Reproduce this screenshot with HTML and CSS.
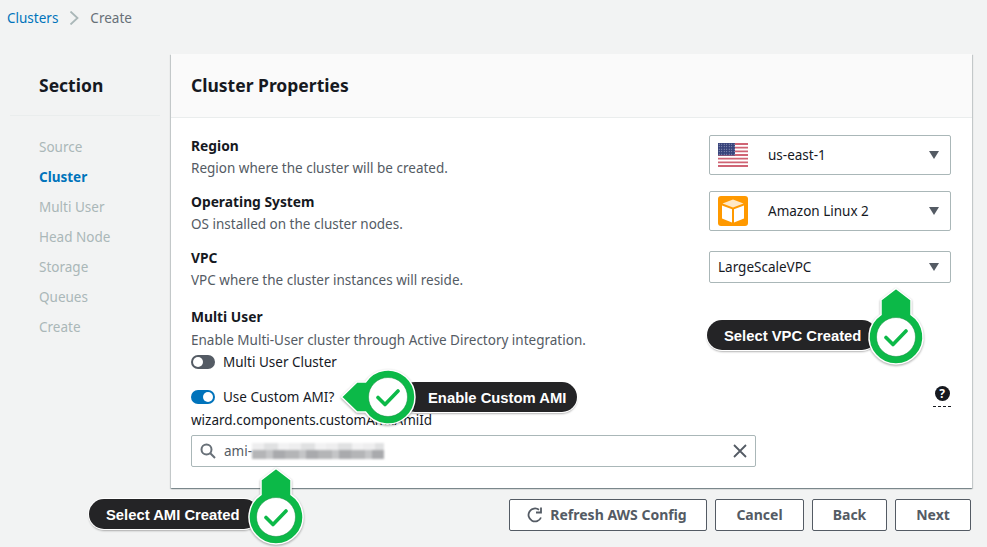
FILE: index.html
```html
<!DOCTYPE html>
<html lang="en">
<head>
    <meta charset="UTF-8">
    <title>Create Cluster</title>
    <link rel="stylesheet" href="styles.css">
</head>
<body>
    <svg class="defs" width="0" height="0">
        <defs>
            <pattern id="stars" width="2.500" height="2.500" patternUnits="userSpaceOnUse">
                <rect width="2.500" height="2.500" fill="#36427a"/>
                <circle cx="1.200" cy="1.200" r="0.500" fill="#b9bfd8"/>
            </pattern>
        </defs>
        <symbol id="check" viewBox="0 0 24 24">
            <path d="M2 12.500l7 7L22 6" fill="none" stroke="#0cb948" stroke-width="3.600" stroke-linecap="round" stroke-linejoin="round"/>
        </symbol>
    </svg>

    <nav class="crumbs">
        <a href="#">Clusters</a>
        <svg class="crumb-sep" width="10" height="14" viewBox="0 0 10 14"><path d="M1.500 .5l7 6.500-7 6.500" fill="none" stroke="#aab7b8" stroke-width="1.800"/></svg>
        <span>Create</span>
    </nav>

    <div class="layout">
        <aside class="sidebar">
            <h2>Section</h2>
            <ul class="steps">
                <li>Source</li>
                <li class="active">Cluster</li>
                <li>Multi User</li>
                <li>Head Node</li>
                <li>Storage</li>
                <li>Queues</li>
                <li>Create</li>
            </ul>
        </aside>

        <main class="main">
            <section class="panel">
                <h1 class="panel-head">Cluster Properties</h1>
                <div class="panel-body">
                    <div class="row">
                        <div>
                            <div class="field-title">Region</div>
                            <div class="field-desc">Region where the cluster will be created.</div>
                        </div>
                        <div class="select select-tall">
                            <svg class="select-icon" width="30" height="24" viewBox="0 0 30 24">
                                <rect width="30" height="24" fill="#fff"/>
                                <path d="M0 1h30M0 4.700h30M0 8.400h30M0 12h30M0 15.700h30M0 19.400h30M0 23h30" stroke="#cf6474" stroke-width="1.800"/>
                                <rect width="17" height="12.500" fill="url(#stars)"/>
                            </svg>
                            <span class="select-text">us-east-1</span>
                            <span class="caret"></span>
                        </div>
                    </div>

                    <div class="row">
                        <div>
                            <div class="field-title">Operating System</div>
                            <div class="field-desc">OS installed on the cluster nodes.</div>
                        </div>
                        <div class="select select-tall">
                            <svg class="select-icon" width="30" height="30" viewBox="0 0 30 30">
                                <rect width="30" height="30" rx="3" fill="#ff9900"/>
                                <path d="M15 3.500l10.500 4-10.500 4-10.500-4z" fill="#ffe9c7"/>
                                <path d="M4 9.500l10 3.800v13.200L4 22.500z" fill="#fff"/>
                                <path d="M26 9.500l-10 3.800v13.200l10-4z" fill="#fff"/>
                            </svg>
                            <span class="select-text">Amazon Linux 2</span>
                            <span class="caret"></span>
                        </div>
                    </div>

                    <div class="row">
                        <div>
                            <div class="field-title">VPC</div>
                            <div class="field-desc">VPC where the cluster instances will reside.</div>
                        </div>
                        <div class="select select-short">
                            <span>LargeScaleVPC</span>
                            <span class="caret"></span>
                        </div>
                    </div>

                    <div class="multi-user">
                        <div class="field-title">Multi User</div>
                        <div class="field-desc">Enable Multi-User cluster through Active Directory integration.</div>
                        <div class="toggle-row">
                            <span class="toggle"></span>
                            <span>Multi User Cluster</span>
                        </div>
                    </div>

                    <div class="ami-row">
                        <div class="toggle-row">
                            <span class="toggle toggle-on"></span>
                            <span>Use Custom AMI?</span>
                        </div>
                        <span class="help"><span class="help-mark">?</span></span>
                    </div>
                    <div class="ami-label">wizard.components.customAmi.AmiId</div>
                    <div class="search">
                        <svg width="16" height="16" viewBox="0 0 16 16"><circle cx="6.500" cy="6.500" r="5" fill="none" stroke="#687078" stroke-width="2"/><path d="M10.300 10.300L15 15" stroke="#687078" stroke-width="2"/></svg>
                        <span class="search-text">ami-<span class="redacted"></span></span>
                        <svg width="14" height="14" viewBox="0 0 14 14"><path d="M1 1l12 12M13 1L1 13" stroke="#545b64" stroke-width="1.800"/></svg>
                    </div>
                </div>
            </section>

            <div class="actions">
                <button type="button" class="btn btn-refresh">
                    <svg width="16" height="16" viewBox="0 0 16 16"><path d="M14 10.500A6.500 6.500 0 1 1 12 2.800" fill="none" stroke="#545b64" stroke-width="1.800"/><path d="M9 4.500h5v-5" fill="none" stroke="#545b64" stroke-width="1.800" transform="translate(0 1)"/></svg>
                    Refresh AWS Config
                </button>
                <button type="button" class="btn btn-cancel">Cancel</button>
                <button type="button" class="btn btn-back">Back</button>
                <button type="button" class="btn btn-next">Next</button>
            </div>
        </main>
    </div>

    <!-- callouts drawn on top of the screenshot -->
    <div class="callout callout-vpc">
        <span class="pill">Select VPC Created</span>
        <svg class="pin" width="60" height="80" viewBox="0 0 60 80">
            <path d="M30 1.500L45 13V27.550A27 27 0 1 1 15 27.550V13z" fill="#0cb948" stroke="#fff" stroke-width="1.500"/>
            <circle cx="30" cy="50" r="19.500" fill="#fff" stroke="#0a8a38" stroke-width="0.500"/>
            <use href="#check" x="18" y="38" width="24" height="24"/>
        </svg>
    </div>

    <div class="callout callout-ami">
        <span class="pill">Enable Custom AMI</span>
        <svg class="pin" width="80" height="60" viewBox="0 0 80 60">
            <path d="M1.500 30L17 15H25.550A27 27 0 1 1 25.550 45H17z" fill="#0cb948" stroke="#fff" stroke-width="1.500"/>
            <circle cx="48" cy="30" r="19.500" fill="#fff" stroke="#0a8a38" stroke-width="0.500"/>
            <use href="#check" x="36" y="18" width="24" height="24"/>
        </svg>
    </div>

    <div class="callout callout-select">
        <span class="pill">Select AMI Created</span>
        <svg class="pin" width="60" height="80" viewBox="0 0 60 80">
            <path d="M30 1.500L45 13V27.550A27 27 0 1 1 15 27.550V13z" fill="#0cb948" stroke="#fff" stroke-width="1.500"/>
            <circle cx="30" cy="50" r="19.500" fill="#fff" stroke="#0a8a38" stroke-width="0.500"/>
            <use href="#check" x="18" y="38" width="24" height="24"/>
        </svg>
    </div>
</body>
</html>
```

FILE: styles.css
```css
* {
    box-sizing: border-box;
}

html, body {
    height: 100%;
}

body {
    margin: 0;
    position: relative;
    overflow: hidden;
    background-color: #f2f3f3;
    color: #16191f;
    font-family: "Noto Sans", sans-serif;
    font-size: 13.500px;
    line-height: 20px;
}

.defs {
    position: absolute;
}

.crumbs {
    height: 54px;
    padding: 8px 7px 0;
    display: flex;
    gap: 11px;
    align-items: flex-start;
    color: #687078;
}

.crumbs a {
    color: #0073bb;
    text-decoration: none;
}

.crumb-sep {
    margin-top: 3px;
}

.layout {
    display: flex;
}

.sidebar {
    width: 171px;
    flex: none;
    padding: 19px 11px 0 10px;
}

.sidebar h2 {
    margin: 0;
    padding: 0 0 18px 29px;
    border-bottom: 1px solid #eaeded;
    font-size: 17.500px;
    line-height: 24px;
    font-weight: 700;
}

.steps {
    list-style: none;
    margin: 21px 0 0;
    padding: 0 0 0 29px;
    display: flex;
    flex-direction: column;
    gap: 10px;
    color: #aab7b8;
}

.steps .active {
    color: #0073bb;
    font-weight: 700;
}

.main {
    width: 801px;
    flex: none;
}

.panel {
    height: 434px;
    background-color: #fff;
    box-shadow: 0 1px 1px rgba(0, 28, 36, 0.3), 1px 1px 1px rgba(0, 28, 36, 0.15), -1px 1px 1px rgba(0, 28, 36, 0.15);
}

.panel-head {
    margin: 0;
    height: 64px;
    padding: 19px 20px 0;
    background-color: #fafafa;
    border-bottom: 1px solid #eaeded;
    font-size: 17.500px;
    line-height: 24px;
    font-weight: 700;
}

.panel-body {
    padding: 18px 21px 0 20px;
}

.row {
    display: flex;
    justify-content: space-between;
    align-items: flex-start;
    height: 42px;
    margin-bottom: 14px;
}

.field-title {
    font-size: 13.800px;
    font-weight: 700;
}

.field-desc {
    margin-top: 2px;
    color: #545b64;
}

.select {
    width: 242px;
    display: flex;
    align-items: center;
    padding: 0 11px 0 8px;
    border: 1px solid #aab7b8;
    border-radius: 2px;
}

.select-tall {
    height: 40px;
    margin-top: -1px;
}

.select-short {
    height: 32px;
    margin-top: 3px;
}

.select-icon {
    flex: none;
    margin-right: 20px;
}

.caret {
    margin-left: auto;
    width: 0;
    height: 0;
    border-left: 5.500px solid transparent;
    border-right: 5.500px solid transparent;
    border-top: 8px solid #545b64;
}

.multi-user {
    margin-top: 17px;
}

.multi-user .field-desc {
    margin-top: 3px;
}

.toggle-row {
    display: flex;
    align-items: center;
    gap: 8px;
}

.multi-user .toggle-row {
    margin-top: 2px;
}

.toggle {
    position: relative;
    width: 24px;
    height: 14px;
    border-radius: 7px;
    background-color: #545b64;
}

.toggle::after {
    content: "";
    position: absolute;
    top: 2px;
    left: 2px;
    width: 10px;
    height: 10px;
    border-radius: 50%;
    background-color: #fff;
}

.toggle-on {
    background-color: #0073bb;
}

.toggle-on::after {
    left: 12px;
}

.ami-row {
    display: flex;
    justify-content: space-between;
    margin-top: 15px;
    height: 20px;
}

.help {
    height: 20px;
    width: 18px;
    display: flex;
    justify-content: center;
    border-bottom: 1px dashed #16191f;
}

.help-mark {
    width: 15px;
    height: 15px;
    margin-top: -1px;
    border-radius: 50%;
    background-color: #16191f;
    color: #fff;
    font-size: 12px;
    font-weight: 700;
    line-height: 15px;
    text-align: center;
}

.ami-label {
    margin-top: 3px;
}

.search {
    width: 565px;
    height: 32px;
    margin-top: 5px;
    display: flex;
    align-items: center;
    gap: 8px;
    padding: 0 8px;
    border: 1px solid #aab7b8;
    border-radius: 2px;
}

.search-text {
    flex: 1;
    display: flex;
    align-items: center;
    color: #545b64;
}

.redacted {
    width: 132px;
    height: 16px;
    background:
        repeating-linear-gradient(90deg, #b4b5b7 0 14px, #c4c5c7 14px 21px, #a9aaad 21px 33px) 0 100% / 100% 9px no-repeat,
        repeating-linear-gradient(90deg, #eeeeef 0 12px, #e0e1e2 12px 26px, #f2f2f3 26px 37px) 0 0 / 100% 8px no-repeat;
    filter: blur(1px);
}

.actions {
    margin-top: 11px;
    padding-right: 1px;
    display: flex;
    justify-content: flex-end;
    gap: 8px;
}

.btn {
    height: 32px;
    display: flex;
    align-items: center;
    justify-content: center;
    gap: 7px;
    padding: 0;
    background-color: #fff;
    border: 1px solid #545b64;
    border-radius: 2px;
    color: #545b64;
    font: 700 14px/20px "Noto Sans", sans-serif;
    cursor: pointer;
}

.btn-refresh {
    width: 198px;
    padding-right: 2px;
}

.btn-cancel {
    width: 89px;
}

.btn-back {
    width: 75px;
}

.btn-next {
    width: 76px;
}

.callout {
    position: absolute;
}

.pin {
    position: absolute;
    filter: drop-shadow(0 1px 1px rgba(0, 0, 0, 0.35));
}

.pill {
    position: absolute;
    display: flex;
    align-items: center;
    height: 30px;
    padding-top: 2px;
    border-radius: 15px;
    background-color: #242426;
    box-shadow: 0 0 0 1px #fff, 0 2px 2px rgba(0, 0, 0, 0.3);
    color: #fff;
    font-family: "Liberation Sans", Arial, sans-serif;
    font-size: 14.800px;
    font-weight: 700;
    white-space: nowrap;
}

.callout-vpc {
    left: 707px;
    top: 287px;
    width: 220px;
    height: 80px;
}

.callout-vpc .pill {
    left: 0;
    top: 33px;
    width: 170px;
    padding-left: 17px;
}

.callout-vpc .pin {
    left: 159px;
    top: 0;
}

.callout-ami {
    left: 340px;
    top: 367px;
    width: 238px;
    height: 60px;
}

.callout-ami .pin {
    left: 0;
    top: 0;
}

.callout-ami .pill {
    left: 60px;
    top: 15px;
    width: 177px;
    padding-left: 28px;
}

.callout-select {
    left: 89px;
    top: 467px;
    width: 220px;
    height: 80px;
}

.callout-select .pill {
    left: 0;
    top: 32px;
    width: 170px;
    padding-left: 17px;
}

.callout-select .pin {
    left: 157px;
    top: 0;
}
```
